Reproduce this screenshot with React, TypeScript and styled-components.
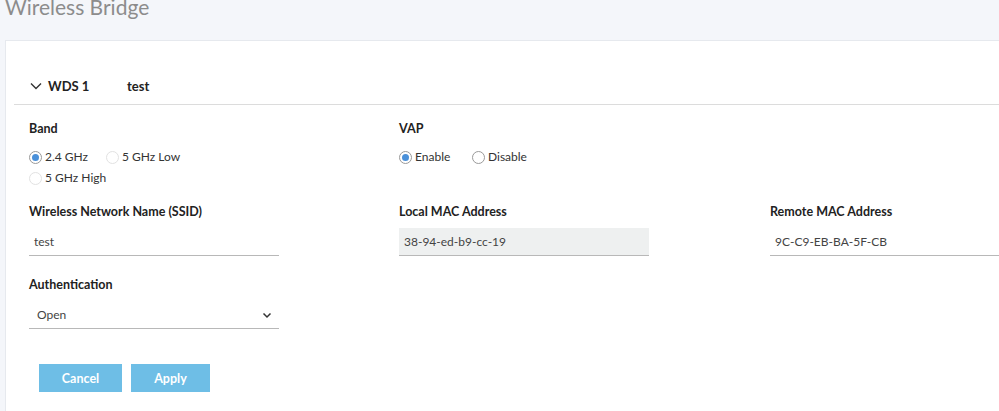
import React from "react";
import styled, { createGlobalStyle } from "styled-components";

const Global = createGlobalStyle`
  html, body { margin: 0; padding: 0; background: #f4f6fa; }
  body { font-family: "Lato", "Noto Sans", sans-serif; color: #222; overflow: hidden; }
  * { box-sizing: border-box; }
`;

const Page = styled.div`
  width: 999px;
  height: 411px;
  overflow: hidden;
  background: #f4f6fa;
`;

const TitleBar = styled.div`
  height: 40px;
  padding-left: 5px;
  overflow: hidden;
`;

const Title = styled.h1`
  margin: -6px 0 0;
  font-size: 21px;
  line-height: 26px;
  font-weight: 400;
  color: #8c8c8c;
`;

const Card = styled.div`
  margin-left: 5px;
  background: #fff;
  border-top: 1px solid #e6e9ee;
  border-left: 1px solid #e6e9ee;
  height: 371px;
  padding-top: 27px;
`;

const SectionHeader = styled.div`
  margin-left: 8px;
  height: 37px;
  display: flex;
  align-items: center;
  padding-left: 16px;
  border-bottom: 1px solid #dcdcdc;
  font-weight: 700;
  font-size: 13px;
  color: #222;
`;

const Chevron = styled.svg`
  width: 12px;
  height: 12px;
  margin-right: 6px;
`;

const WdsName = styled.span`
  width: 79px;
`;

const Body = styled.div`
  padding: 16px 0 0 23px;
`;

const Grid = styled.div`
  display: grid;
  grid-template-columns: 370px 371px 1fr;
  row-gap: 21px;
`;

const Field = styled.div`
  display: flex;
  flex-direction: column;
`;

const Label = styled.label`
  font-size: 12.5px;
  font-weight: 700;
  color: #222;
  line-height: 16px;
  margin-bottom: 8px;
`;

const RadioGroup = styled.div`
  display: flex;
  flex-wrap: wrap;
  width: 190px;
  row-gap: 5px;
  margin-top: 4px;
  margin-bottom: -3px;
`;

const RadioItem = styled.span<{ $w?: number }>`
  display: inline-flex;
  align-items: center;
  font-size: 12px;
  color: #333;
  line-height: 16px;
  width: ${(p) => (p.$w ? p.$w + "px" : "auto")};
`;

const RadioCircle = styled.span<{ $on?: boolean; $faint?: boolean }>`
  width: 13px;
  height: 13px;
  border-radius: 50%;
  border: 1px solid ${(p) => (p.$faint ? "#e2e2e2" : "#9a9a9a")};
  margin-right: 3px;
  display: inline-flex;
  align-items: center;
  justify-content: center;
  background: #fff;
  &::after {
    content: "";
    width: 7px;
    height: 7px;
    border-radius: 50%;
    background: ${(p) => (p.$on ? "#4a90d9" : "transparent")};
  }
`;

const Input = styled.div<{ $disabled?: boolean; $w?: number }>`
  width: ${(p) => (p.$w ? p.$w + "px" : "250px")};
  height: 28px;
  display: flex;
  align-items: center;
  padding-left: 5px;
  font-size: 12px;
  color: #444;
  background: ${(p) => (p.$disabled ? "#eef0f0" : "transparent")};
  border-bottom: 1px solid #b8b8b8;
`;

const Select = styled(Input)`
  padding-left: 8px;
  padding-right: 6px;
  justify-content: space-between;
`;

const Buttons = styled.div`
  display: flex;
  gap: 9px;
  margin: 35px 0 0 10px;
`;

const Button = styled.button<{ $w: number }>`
  width: ${(p) => p.$w}px;
  height: 28px;
  border: none;
  background: #6ebee6;
  color: #fff;
  font-family: inherit;
  font-weight: 700;
  font-size: 12.5px;
  padding: 0;
`;

const ChevronDown = ({ size = 12 }: { size?: number }) => (
  <svg width={size} height={size} viewBox="0 0 12 12">
    <path d="M2.5 4.5 L6 8 L9.5 4.5" fill="none" stroke="#333" strokeWidth="1.5" />
  </svg>
);

export default function App() {
  return (
    <Page>
      <Global />
      <TitleBar>
        <Title>Wireless Bridge</Title>
      </TitleBar>
      <Card>
        <SectionHeader>
          <Chevron viewBox="0 0 12 12">
            <path d="M1 3.5 L6 8.5 L11 3.5" fill="none" stroke="#333" strokeWidth="1.4" />
          </Chevron>
          <WdsName>WDS 1</WdsName>
          <span>test</span>
        </SectionHeader>
        <Body>
          <Grid>
            <Field>
              <Label>Band</Label>
              <RadioGroup>
                <RadioItem $w={77}>
                  <RadioCircle $on />
                  2.4 GHz
                </RadioItem>
                <RadioItem>
                  <RadioCircle $faint />
                  5 GHz Low
                </RadioItem>
                <RadioItem>
                  <RadioCircle $faint />
                  5 GHz High
                </RadioItem>
              </RadioGroup>
            </Field>
            <Field>
              <Label>VAP</Label>
              <RadioGroup>
                <RadioItem $w={73}>
                  <RadioCircle $on />
                  Enable
                </RadioItem>
                <RadioItem>
                  <RadioCircle />
                  Disable
                </RadioItem>
              </RadioGroup>
            </Field>
            <div />
            <Field>
              <Label>Wireless Network Name (SSID)</Label>
              <Input>test</Input>
            </Field>
            <Field>
              <Label>Local MAC Address</Label>
              <Input $disabled>38-94-ed-b9-cc-19</Input>
            </Field>
            <Field>
              <Label>Remote MAC Address</Label>
              <Input $w={240}>9C-C9-EB-BA-5F-CB</Input>
            </Field>
            <Field>
              <Label>Authentication</Label>
              <Select>
                <span>Open</span>
                <ChevronDown />
              </Select>
            </Field>
          </Grid>
          <Buttons>
            <Button $w={83}>Cancel</Button>
            <Button $w={79}>Apply</Button>
          </Buttons>
        </Body>
      </Card>
    </Page>
  );
}
